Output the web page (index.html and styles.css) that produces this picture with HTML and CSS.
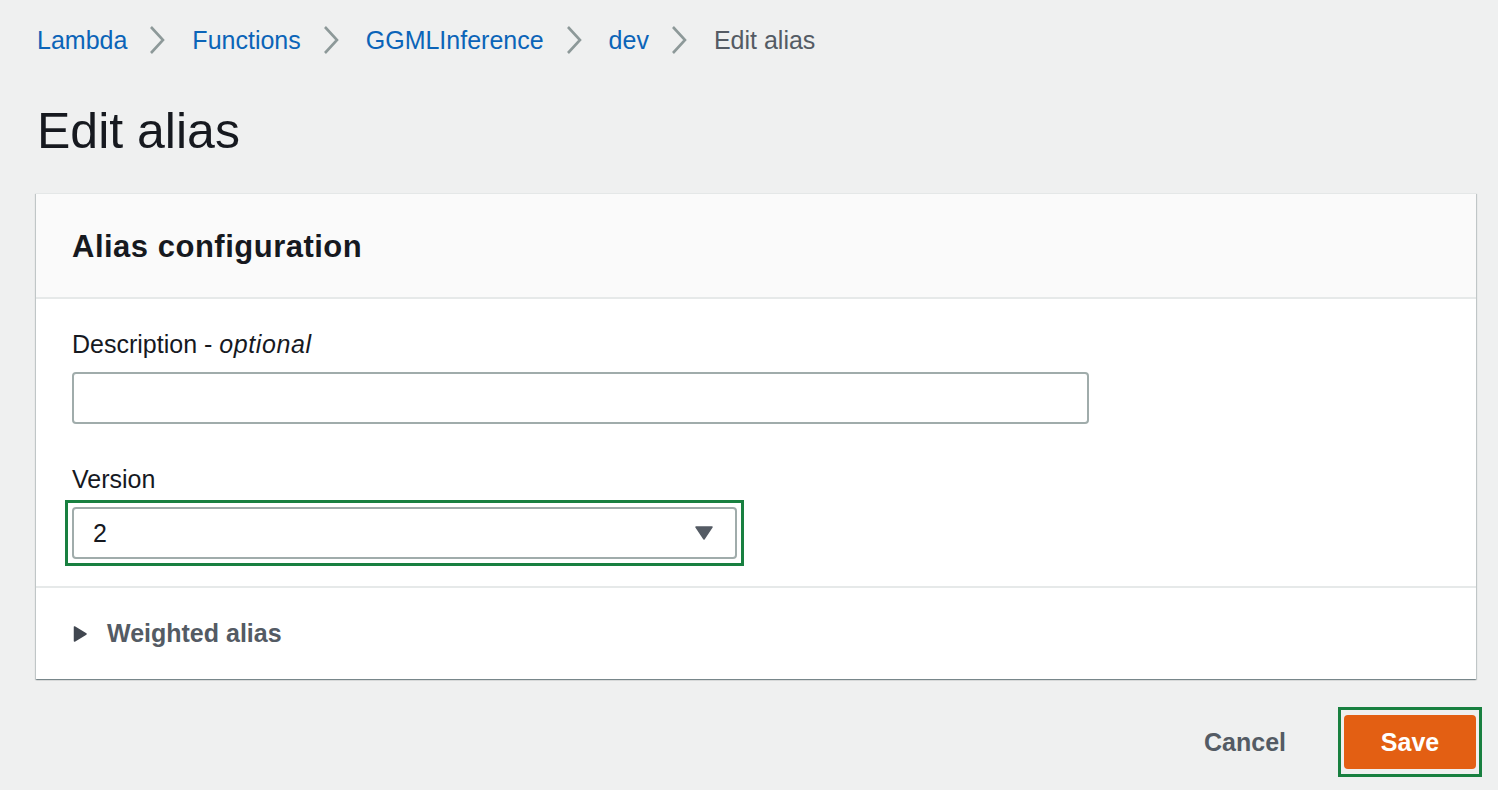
FILE: index.html
```html
<!DOCTYPE html>
<html lang="en">
<head>
<meta charset="utf-8">
<title>Edit alias</title>
<link rel="stylesheet" href="styles.css">
</head>
<body>
<div class="page">
  <nav class="breadcrumbs">
    <a class="crumb" href="#">Lambda</a>
    <svg class="chev" viewBox="0 0 18 30" width="18" height="30"><polyline points="3,2 15,15 3,28" fill="none" stroke="#8d9999" stroke-width="2.6"/></svg>
    <a class="crumb" href="#">Functions</a>
    <svg class="chev" viewBox="0 0 18 30" width="18" height="30"><polyline points="3,2 15,15 3,28" fill="none" stroke="#8d9999" stroke-width="2.6"/></svg>
    <a class="crumb" href="#">GGMLInference</a>
    <svg class="chev" viewBox="0 0 18 30" width="18" height="30"><polyline points="3,2 15,15 3,28" fill="none" stroke="#8d9999" stroke-width="2.6"/></svg>
    <a class="crumb" href="#">dev</a>
    <svg class="chev" viewBox="0 0 18 30" width="18" height="30"><polyline points="3,2 15,15 3,28" fill="none" stroke="#8d9999" stroke-width="2.6"/></svg>
    <span class="crumb current">Edit alias</span>
  </nav>

  <h1 class="title">Edit alias</h1>

  <section class="card">
    <header class="card-header">
      <h2 class="card-title">Alias configuration</h2>
    </header>
    <div class="card-body">
      <div class="field">
        <label class="label">Description - <em>optional</em></label>
        <div class="input"></div>
      </div>
      <div class="field field-version">
        <label class="label">Version</label>
        <div class="focus-ring">
          <div class="select">
            <span class="select-value">2</span>
            <svg class="caret" viewBox="0 0 18 14" width="18" height="14"><path d="M1 1 H17 L9 13 Z" fill="#545b64" stroke="#545b64" stroke-width="1.5" stroke-linejoin="round"/></svg>
          </div>
        </div>
      </div>
    </div>
    <div class="expander">
      <svg class="expander-caret" viewBox="0 0 14 16" width="14" height="16"><path d="M1.5 1 V15 L13 8 Z" fill="#414750" stroke="#414750" stroke-width="1.5" stroke-linejoin="round"/></svg>
      <span class="expander-text">Weighted alias</span>
    </div>
  </section>

  <div class="actions">
    <button class="btn btn-link">Cancel</button>
    <div class="focus-ring focus-ring-btn">
      <button class="btn btn-primary">Save</button>
    </div>
  </div>
</div>
</body>
</html>
```

FILE: styles.css
```css
html, body {
  margin: 0;
  padding: 0;
}

body {
  background: #eff0f0;
  font-family: "Liberation Sans", Arial, sans-serif;
  color: #16191f;
}

.page {
  padding: 22px 22px 0 36px;
}

.breadcrumbs {
  display: flex;
  align-items: center;
  height: 36px;
  padding-left: 1px;
}

.crumb {
  font-size: 25px;
  line-height: 36px;
  color: #0b64b8;
  text-decoration: none;
}

.crumb.current {
  color: #545b64;
}

.chev {
  margin: 0 26px 0 21px;
  display: block;
}

.title {
  margin: 0;
  padding-top: 45px;
  font-size: 50px;
  font-weight: 400;
  line-height: 56px;
  color: #16191f;
  padding-left: 1px;
}

.card {
  margin-top: 34px;
  background: #fff;
  border-top: 1px solid #e4e7e7;
  box-shadow: 0 1px 1px 0 rgba(0, 28, 36, 0.3), 1px 1px 1px 0 rgba(0, 28, 36, 0.15), -1px 1px 1px 0 rgba(0, 28, 36, 0.15);
}

.card-header {
  background: #fafafa;
  height: 103px;
  border-bottom: 2px solid #e6e9e9;
  display: flex;
  align-items: center;
  padding: 0 36px;
}

.card-title {
  margin: 0;
  font-size: 31px;
  font-weight: 700;
  letter-spacing: 0.5px;
  color: #16191f;
  padding-top: 3px;
}

.card-body {
  padding: 30px 36px 28px;
  border-bottom: 2px solid #e6e9e9;
}

.field {
  display: flex;
  flex-direction: column;
  align-items: flex-start;
}

.field-version {
  margin-top: 40px;
}

.label {
  font-size: 25px;
  line-height: 30px;
  margin-bottom: 13px;
  color: #16191f;
}

.label em {
  font-style: italic;
  letter-spacing: 0.6px;
}

.input {
  width: 1017px;
  height: 52px;
  box-sizing: border-box;
  border: 2px solid #a0acab;
  border-radius: 4px;
  background: #fff;
}

.focus-ring {
  border: 3px solid #188040;
  padding: 4px;
  margin: -7px 0 -8px -7px;
}

.select {
  width: 665px;
  height: 52px;
  box-sizing: border-box;
  border: 2px solid #a0acab;
  border-radius: 4px;
  background: #fff;
  display: flex;
  align-items: center;
  justify-content: space-between;
  padding: 0 22px 0 19px;
}

.select-value {
  font-size: 25px;
  color: #16191f;
}

.caret {
  display: block;
}

.expander {
  height: 91px;
  display: flex;
  align-items: center;
  padding: 0 37px;
}

.expander-caret {
  display: block;
  margin-right: 20px;
}

.expander-text {
  font-size: 25px;
  font-weight: 700;
  color: #545b64;
}

.actions {
  display: flex;
  justify-content: flex-end;
  align-items: center;
  margin-top: 28px;
}

.focus-ring-btn {
  padding: 5px 3px;
  margin: 0 -6px 0 0;
}

.btn {
  font-family: "Liberation Sans", Arial, sans-serif;
  font-size: 25px;
  font-weight: 700;
  border: none;
  cursor: pointer;
  display: block;
}

.btn-link {
  background: transparent;
  color: #545b64;
  padding: 0;
  margin-right: 52px;
  height: 54px;
}

.btn-primary {
  width: 132px;
  height: 54px;
  background: #e35f13;
  color: #fff;
  border-radius: 4px;
}
```
